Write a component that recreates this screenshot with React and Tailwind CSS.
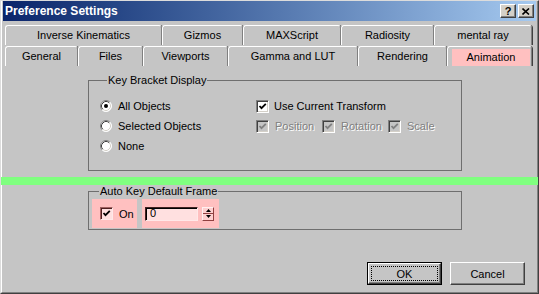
import React from "react";

const font = { fontFamily: '"Liberation Sans", Arial, sans-serif' };

function Radio({ checked }) {
  return (
    <svg width="12" height="12" viewBox="0 0 12 12" className="shrink-0">
      <circle cx="6" cy="6" r="5.5" fill="#ffffff" />
      <path d="M2.11 9.89 A5.5 5.5 0 0 1 9.89 2.11" stroke="#808080" strokeWidth="1" fill="none" />
      <path d="M9.89 2.11 A5.5 5.5 0 0 1 2.11 9.89" stroke="#ffffff" strokeWidth="1" fill="none" />
      <path d="M2.82 9.18 A4.5 4.5 0 0 1 9.18 2.82" stroke="#404040" strokeWidth="1" fill="none" />
      <path d="M9.18 2.82 A4.5 4.5 0 0 1 2.82 9.18" stroke="#d4d0c8" strokeWidth="1" fill="none" />
      {checked && <circle cx="6" cy="6" r="2" fill="#000000" />}
    </svg>
  );
}

function Check({ disabled }) {
  return (
    <div
      className={
        "w-[13px] h-[13px] shrink-0 border border-t-[#808080] border-l-[#808080] border-b-white border-r-white shadow-[inset_1px_1px_0_#404040,inset_-1px_-1px_0_#d4d0c8] flex items-center justify-center " +
        (disabled ? "bg-[#c5c5c5]" : "bg-white")
      }
    >
      <svg width="9" height="9" viewBox="0 0 9 9">
        <polyline
          points="1.5,4 3.5,6.2 7.8,1.8"
          fill="none"
          stroke={disabled ? "#808080" : "#000000"}
          strokeWidth="1.8"
        />
      </svg>
    </div>
  );
}

function Tab({ w, children, active }) {
  return (
    <div
      className={
        "h-full shrink-0 border-t border-l border-r border-t-white border-l-white border-r-[#808080] rounded-t-[3px] shadow-[1px_0_0_#404040] flex items-stretch " +
        (active ? "pl-[4px] pr-[1px] pt-[2px]" : "")
      }
      style={{ width: w }}
    >
      <div
        className={
          "flex-1 flex items-center justify-center text-[11px] leading-none " +
          (active ? "bg-[#ffc0c0]" : "")
        }
      >
        {children}
      </div>
    </div>
  );
}

export default function App() {
  return (
    <div
      className="w-[539px] h-[294px] relative bg-[#c5c5c5] text-black border-t border-l border-r border-b border-t-[#dcdcdc] border-l-[#dcdcdc] border-r-[#404040] border-b-[#404040] overflow-hidden"
      style={font}
    >
      <div className="h-full flex flex-col border-l border-r border-b border-l-white border-r-[#808080] border-b-[#808080]">
        {/* Title bar */}
        <div className="h-[20px] mx-[1px] bg-gradient-to-r from-[#0a246a] to-[#a6caf0] flex items-center pl-[2px] pr-[2px]">
          <span className="text-white font-bold text-[12px] leading-none">Preference Settings</span>
          <div className="ml-auto flex gap-[2px]">
            <div className="w-[16px] h-[14px] bg-[#d4d0c8] border border-t-white border-l-white border-r-[#404040] border-b-[#404040] shadow-[inset_-1px_-1px_0_#808080] flex items-center justify-center text-[11px] font-bold leading-none">
              ?
            </div>
            <div className="w-[16px] h-[14px] bg-[#d4d0c8] border border-t-white border-l-white border-r-[#404040] border-b-[#404040] shadow-[inset_-1px_-1px_0_#808080] flex items-center justify-center">
              <svg width="8" height="7" viewBox="0 0 8 7">
                <path d="M0.5 0.5 L7 6.5 M7 0.5 L0.5 6.5" stroke="#000" strokeWidth="1.6" />
              </svg>
            </div>
          </div>
        </div>

        {/* Tabs */}
        <div className="pl-[3px] pt-[4px] flex flex-col">
          <div className="h-[20px] flex">
            <Tab w={157}>Inverse Kinematics</Tab>
            <Tab w={81}>Gizmos</Tab>
            <Tab w={98}>MAXScript</Tab>
            <Tab w={93}>Radiosity</Tab>
            <Tab w={98}>mental ray</Tab>
          </div>
          <div className="h-[20px] mt-[1px] flex">
            <Tab w={73}>General</Tab>
            <Tab w={65}>Files</Tab>
            <Tab w={85}>Viewports</Tab>
            <Tab w={130}>Gamma and LUT</Tab>
            <Tab w={89}>Rendering</Tab>
            <Tab w={85} active>Animation</Tab>
          </div>
        </div>

        {/* Body */}
        <div className="flex-1 flex flex-col text-[11px] leading-[14px]">
          <fieldset className="mt-[7px] ml-[86px] w-[374px] border border-[#6f6f6f] pl-[11px] pt-[9px] pb-[14px]">
            <legend className="ml-[7px] px-[1px]">Key Bracket Display</legend>
            <div className="flex">
              <div className="w-[156px] flex flex-col">
                <div className="h-[20px] flex items-center gap-[6px]">
                  <Radio checked />
                  <span>All Objects</span>
                </div>
                <div className="h-[20px] flex items-center gap-[6px]">
                  <Radio />
                  <span>Selected Objects</span>
                </div>
                <div className="h-[20px] flex items-center gap-[6px]">
                  <Radio />
                  <span>None</span>
                </div>
              </div>
              <div className="flex flex-col">
                <div className="h-[20px] flex items-center gap-[5px]">
                  <Check />
                  <span>Use Current Transform</span>
                </div>
                <div className="h-[20px] flex items-center text-[#808080] [text-shadow:1px_1px_0_#ffffff]">
                  <div className="w-[66px] flex items-center gap-[6px]">
                    <Check disabled />
                    <span>Position</span>
                  </div>
                  <div className="w-[66px] flex items-center gap-[6px]">
                    <Check disabled />
                    <span>Rotation</span>
                  </div>
                  <div className="flex items-center gap-[6px]">
                    <Check disabled />
                    <span>Scale</span>
                  </div>
                </div>
              </div>
            </div>
          </fieldset>

          <fieldset className="mt-[13px] ml-[86px] w-[374px] border border-[#6f6f6f] pl-[3px] pt-[1px] pb-[1px]">
            <legend className="ml-[7px] px-[1px]">Auto Key Default Frame</legend>
            <div className="flex gap-[5px]">
              <div className="w-[45px] h-[29px] bg-[#ffc0c0] flex items-center pl-[8px] gap-[6px]">
                <div className="w-[13px] h-[13px] shrink-0 border border-t-[#a06060] border-l-[#a06060] border-b-[#ffe8e8] border-r-[#ffe8e8] shadow-[inset_1px_1px_0_#502020] bg-[#ffe0e0] flex items-center justify-center">
                  <svg width="9" height="9" viewBox="0 0 9 9">
                    <polyline points="1.5,4 3.5,6.2 7.8,1.8" fill="none" stroke="#000" strokeWidth="1.8" />
                  </svg>
                </div>
                <span>On</span>
              </div>
              <div className="w-[77px] h-[29px] bg-[#ffc0c0] flex items-center pl-[3px] gap-[4px]">
                <div className="w-[53px] h-[14px] bg-[#ffe0e0] border border-t-[#402020] border-l-[#402020] border-b-[#ffe8e8] border-r-[#ffe8e8] shadow-[inset_1px_1px_0_#000000] flex items-center pl-[4px] text-[11px] leading-none">
                  0
                </div>
                <div className="w-[12px] h-[14px] flex flex-col bg-[#ffd0d0] border border-t-[#fff0f0] border-l-[#fff0f0] border-b-[#904040] border-r-[#904040]">
                  <div className="flex-1 flex items-center justify-center">
                    <svg width="5" height="3" viewBox="0 0 5 3"><path d="M2.5 0 L5 3 L0 3 Z" fill="#000" /></svg>
                  </div>
                  <div className="h-px bg-[#904040]" />
                  <div className="flex-1 flex items-center justify-center">
                    <svg width="5" height="3" viewBox="0 0 5 3"><path d="M0 0 L5 0 L2.5 3 Z" fill="#000" /></svg>
                  </div>
                </div>
              </div>
            </div>
          </fieldset>

          <div className="flex-1" />

          <div className="flex justify-end gap-[8px] pr-[12px] pb-[7px]">
            <div className="w-[75px] h-[23px] border border-black p-0">
              <div className="w-full h-full border border-t-white border-l-white border-r-[#404040] border-b-[#404040] shadow-[inset_-1px_-1px_0_#808080] p-[2px]">
                <div className="w-full h-full border border-dotted border-black flex items-center justify-center">OK</div>
              </div>
            </div>
            <div className="w-[75px] h-[23px] border border-t-white border-l-white border-r-[#404040] border-b-[#404040] shadow-[inset_-1px_-1px_0_#808080] flex items-center justify-center">
              Cancel
            </div>
          </div>
        </div>
      </div>

      {/* Green highlight bar overlay */}
      <div className="absolute left-0 top-[176px] w-[538px] h-[8px] bg-[#80ff80]" />
    </div>
  );
}
